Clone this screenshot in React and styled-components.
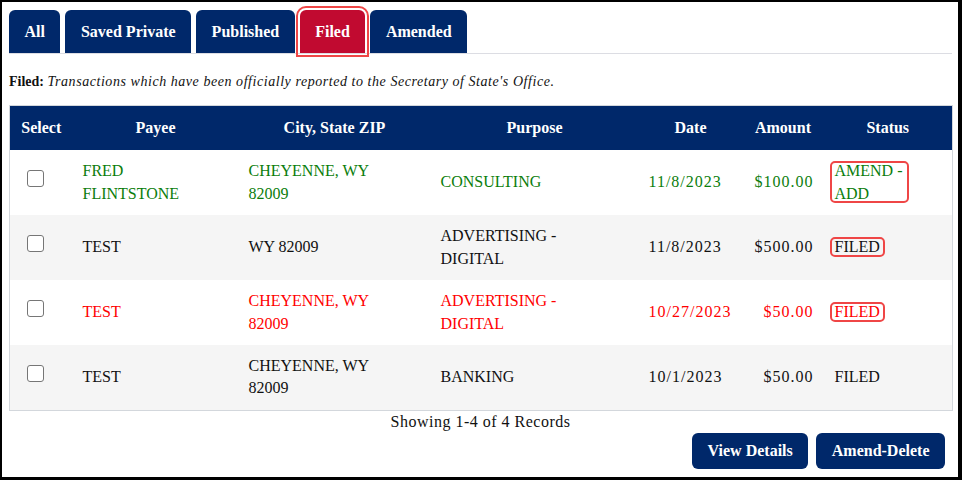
import React from "react";
import styled, { createGlobalStyle } from "styled-components";

const GlobalStyle = createGlobalStyle`
  html, body {
    margin: 0;
    padding: 0;
    background: #fff;
  }
  body {
    font-family: "Liberation Serif", "Times New Roman", serif;
    color: #111;
  }
`;

const NAVY = "#00286a";
const RED_TAB = "#c10a30";
const MARK = "#ef4646";

const Frame = styled.div`
  width: 962px;
  height: 480px;
  box-sizing: border-box;
  border: 2px solid #000;
  border-right-width: 4px;
  border-bottom-width: 3px;
  padding: 8px 6px 0 7px;
  overflow: hidden;
`;

const TabBar = styled.div`
  display: flex;
  gap: 5px;
  border-bottom: 1px solid #dcdde3;
`;

const Tab = styled.button`
  height: 43px;
  padding: 0 15.5px;
  border: 0;
  border-radius: 6px 6px 0 0;
  background: ${(p) => (p.$active ? RED_TAB : NAVY)};
  color: #fff;
  font-family: inherit;
  font-size: 16px;
  font-weight: bold;
  cursor: pointer;
  outline: ${(p) => (p.$active ? `2px solid ${MARK}` : "none")};
  outline-offset: 2px;
`;

const Description = styled.p`
  margin: 18px 0 13px;
  font-size: 14px;
  line-height: 20px;

  b {
    font-weight: bold;
  }
  i {
    font-style: italic;
    letter-spacing: 0.55px;
  }
`;

const Table = styled.table`
  width: 943px;
  table-layout: fixed;
  border-collapse: collapse;
  border: 1px solid #d3d7dc;
  font-size: 16px;
  line-height: 22.4px;
`;

const HeadCell = styled.th`
  height: 44px;
  padding: 0;
  background: ${NAVY};
  color: #fff;
  font-weight: bold;
  text-align: center;
  vertical-align: middle;
`;

const Row = styled.tr`
  height: 65px;
  background: ${(p) => (p.$shaded ? "#f5f5f5" : "#fff")};
  color: ${(p) => p.$tone};
`;

const Cell = styled.td`
  padding: 0 ${(p) => p.$padRight || 10}px 0 10px;
  vertical-align: middle;
  text-align: ${(p) => (p.$right ? "right" : "left")};
  letter-spacing: ${(p) => (p.$numeric ? "1px" : "normal")};
`;

const SelectCell = styled.td`
  padding: 0 0 0 17px;
  vertical-align: middle;
`;

const StatusCell = styled.td`
  padding: 0 48px 0 11px;
  vertical-align: middle;
`;

const Check = styled.input.attrs({ type: "checkbox" })`
  appearance: none;
  display: block;
  width: 17px;
  height: 17px;
  margin: 0 0 8px 0;
  border: 1px solid #767676;
  border-radius: 3px;
  background: #fff;
  box-sizing: border-box;
`;

const Badge = styled.span`
  display: inline-block;
  position: relative;

  &::after {
    content: "";
    position: absolute;
    top: 1px;
    bottom: 2px;
    left: -5px;
    right: -5px;
    border: 2px solid ${MARK};
    border-radius: 5px;
    pointer-events: none;
  }
`;

const Footer = styled.div`
  width: 943px;
  text-align: center;
  font-size: 16px;
  line-height: 22.4px;
  letter-spacing: 0.5px;
`;

const Actions = styled.div`
  display: flex;
  justify-content: flex-end;
  gap: 8px;
  width: 943px;
  padding-right: 7px;
  box-sizing: border-box;
`;

const ActionButton = styled.button`
  height: 36px;
  padding: 0 15.5px;
  border: 0;
  border-radius: 6px;
  background: ${NAVY};
  color: #fff;
  font-family: inherit;
  font-size: 16px;
  font-weight: bold;
  cursor: pointer;
`;

const tabs = ["All", "Saved Private", "Published", "Filed", "Amended"];

const columns = [
  { label: "Select", width: 63 },
  { label: "Payee", width: 166 },
  { label: "City, State ZIP", width: 192 },
  { label: "Purpose", width: 208 },
  { label: "Date", width: 104 },
  { label: "Amount", width: 81 },
  { label: "Status", width: 129 },
];

const rows = [
  {
    payee: "FRED FLINTSTONE",
    city: "CHEYENNE, WY 82009",
    purpose: "CONSULTING",
    date: "11/8/2023",
    amount: "$100.00",
    status: "AMEND - ADD",
    marked: true,
    tone: "#0b7d0b",
  },
  {
    payee: "TEST",
    city: "WY 82009",
    purpose: "ADVERTISING - DIGITAL",
    date: "11/8/2023",
    amount: "$500.00",
    status: "FILED",
    marked: true,
    tone: "#111",
  },
  {
    payee: "TEST",
    city: "CHEYENNE, WY 82009",
    purpose: "ADVERTISING - DIGITAL",
    date: "10/27/2023",
    amount: "$50.00",
    status: "FILED",
    marked: true,
    tone: "#ff0000",
  },
  {
    payee: "TEST",
    city: "CHEYENNE, WY 82009",
    purpose: "BANKING",
    date: "10/1/2023",
    amount: "$50.00",
    status: "FILED",
    marked: false,
    tone: "#111",
  },
];

export default function App() {
  return (
    <>
      <GlobalStyle />
      <Frame>
        <TabBar>
          {tabs.map((t) => (
            <Tab key={t} $active={t === "Filed"}>
              {t}
            </Tab>
          ))}
        </TabBar>

        <Description>
          <b>Filed:</b>{" "}
          <i>Transactions which have been officially reported to the Secretary of State's Office.</i>
        </Description>

        <Table>
          <colgroup>
            {columns.map((c) => (
              <col key={c.label} style={{ width: c.width }} />
            ))}
          </colgroup>
          <thead>
            <tr>
              {columns.map((c) => (
                <HeadCell key={c.label}>{c.label}</HeadCell>
              ))}
            </tr>
          </thead>
          <tbody>
            {rows.map((r, i) => (
              <Row key={i} $shaded={i % 2 === 1} $tone={r.tone}>
                <SelectCell>
                  <Check aria-label={`Select ${r.payee}`} />
                </SelectCell>
                <Cell $padRight={30}>{r.payee}</Cell>
                <Cell $padRight={40}>{r.city}</Cell>
                <Cell $padRight={50}>{r.purpose}</Cell>
                <Cell $numeric>{r.date}</Cell>
                <Cell $right $numeric>{r.amount}</Cell>
                <StatusCell>
                  {r.marked ? <Badge>{r.status}</Badge> : r.status}
                </StatusCell>
              </Row>
            ))}
          </tbody>
        </Table>

        <Footer>Showing 1-4 of 4 Records</Footer>

        <Actions>
          <ActionButton>View Details</ActionButton>
          <ActionButton>Amend-Delete</ActionButton>
        </Actions>
      </Frame>
    </>
  );
}
